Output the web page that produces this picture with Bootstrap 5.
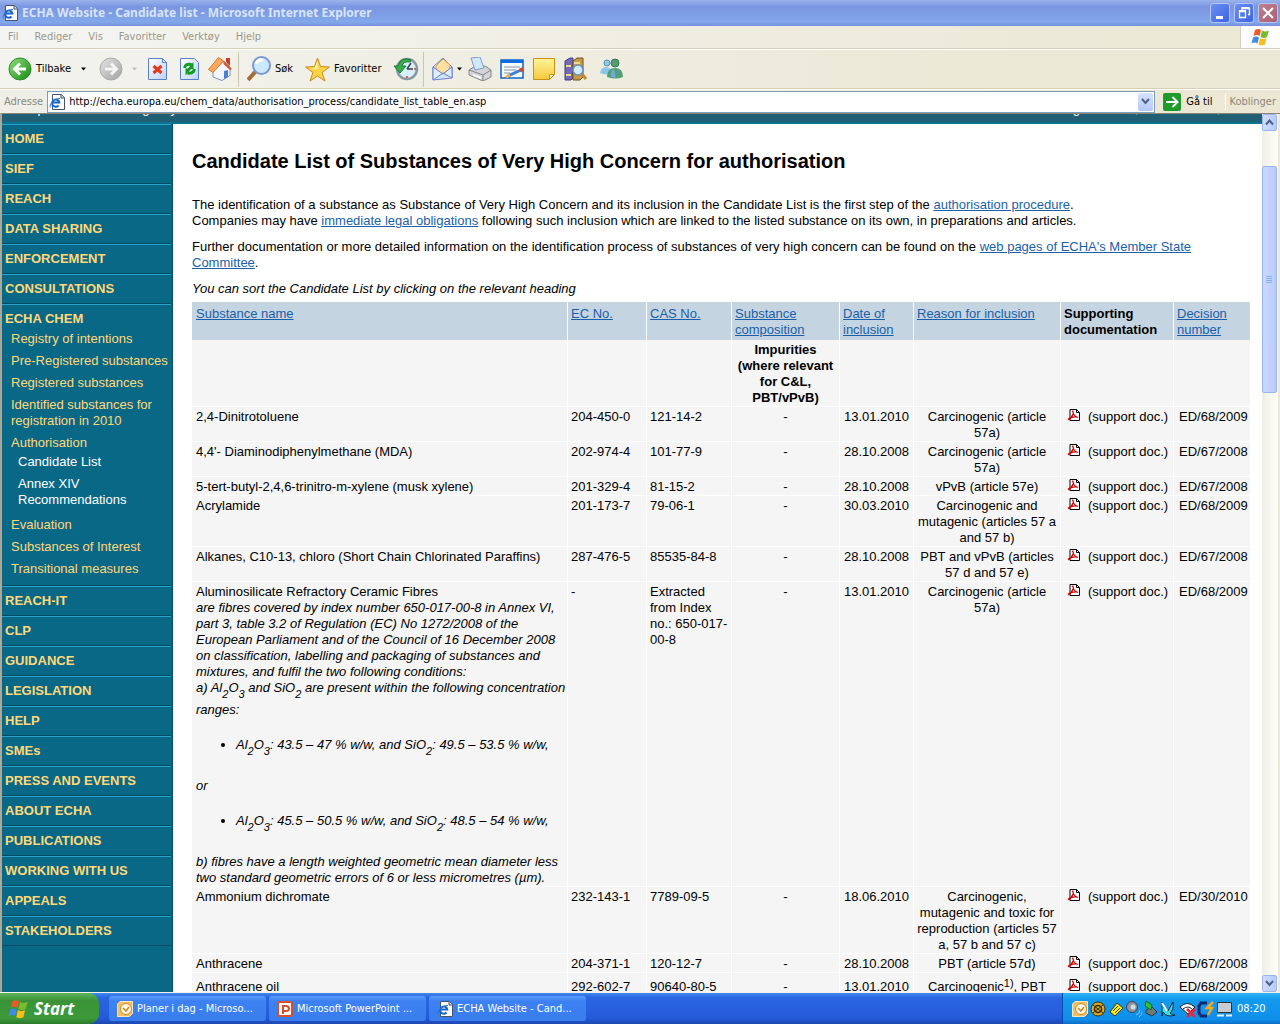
<!DOCTYPE html>
<html lang="en">
<head>
<meta charset="utf-8">
<meta name="viewport" content="width=device-width, initial-scale=1">
<title>ECHA Website - Candidate list</title>
<link href="https://cdn.jsdelivr.net/npm/bootstrap@5.3.0/dist/css/bootstrap.min.css" rel="stylesheet">
<style>
body{font-family:"Liberation Sans",Arial,sans-serif;font-size:13px;line-height:16px;color:#000;background:#ece9d8}
button{font:inherit;color:inherit;background:none;border:0;padding:0}
.chrome-ui{font-family:"DejaVu Sans Condensed","Noto Sans",sans-serif;font-size:11px}
.titlebar{height:26px;background:linear-gradient(#9ab4ec,#7b96e0 25%,#7f9fe6 60%,#82a8ea 85%,#7590de);color:#d8e4f8;font-family:"Noto Sans","Open Sans",sans-serif;font-weight:700;font-size:12px;padding:0 2px}
.winbtn{width:20px;height:20px;border:1px solid #b5c6f2;border-radius:3px;background:linear-gradient(135deg,#6d90f0,#3b63e4);display:flex;align-items:center;justify-content:center}
.winbtn.closing{background:linear-gradient(135deg,#c08090,#a8606f)}
.menubar{height:23px;color:#9c998a;background:linear-gradient(90deg,#f4f5f2,#ece8d6 90%);border-bottom:1px solid #d6d0b8}
.menubar a{color:inherit;text-decoration:none}
.flagbox{width:40px;background:#fff;border-left:1px solid #d6d0b8}
.toolbar{height:40px;background:linear-gradient(90deg,#f3f3ef,#ebe8d5 80%);border-top:1px solid #fff;border-bottom:1px solid #d6d0b8}
.toolbar svg{flex:none}
.vsep{width:1px;height:35px;background:#cbc7ae}
.addressbar{height:24px;border-top:1px solid #fff;background:linear-gradient(90deg,#efefe8,#ebe7d3)}
.addressbar .dimmed{color:#8a887a}
.addrbox{height:22px;border:1px solid #7f9db9;background:#fff;padding:0 1px}
.addrbox input{border:0;outline:0;padding:0;font-size:11px;font-family:inherit;color:#000;background:transparent}
.combo{width:15px;height:18px;border-radius:2px;background:linear-gradient(#d6e2fd,#b4c8f8)}
.viewport{border-left:2px solid #aca899;border-top:1px solid #8a8676;background:#fff}
.band{height:10px;background:#205f74;border-bottom:2px solid #0b7490;color:#fff;overflow:hidden}
.band span{margin-top:-13px}
.sidebar{width:171px;flex:none;background:#0a6887;border-right:1px solid #064d66;padding-right:1px}
.sidebar a{text-decoration:none;color:#ffd877}
.navitem{border-top:1px solid #2aa3cc;border-bottom:1px solid #064d66;padding:6px 3px}
.navitem>a{font-weight:700;display:block}
.sublist{padding:0 0 2px 6px;margin-top:4px}
.sublist li{margin-bottom:6px}
.sublist li:last-child{margin-bottom:0}
.sublist .deeper{padding:3px 7px 3px;margin:0}
.sublist .deeper a{color:#fff}
.maincol{padding:25px 11px 0 19px}
h1{font-size:20px;line-height:24px;font-weight:700;margin:0 0 24px}
.maincol p{margin:0 0 10px}
.maincol a{color:#1b5fa8}
.subst{width:100%;border-collapse:separate;border-spacing:0;table-layout:fixed;margin-top:-5px}
.subst th,.subst td{padding:2px 3px 0;vertical-align:baseline;background:#f5f5f5;border-bottom:1px solid #fff;border-right:1px solid #fff}
.subst thead tr:first-child th{background:#c5d4e1;padding:4px 3px 2px;font-weight:400;border-bottom:0}
.subst thead tr:first-child th.strongth{font-weight:700}
.subst th:first-child,.subst thead tr:first-child th:first-child,.subst td:first-child{padding-left:4px;padding-right:0}
.subst td:nth-child(n+4),.subst .imp{text-align:center}
.subst td:nth-child(n+7){text-align:left;white-space:nowrap}
.subst td:nth-child(8){padding-left:5px;padding-right:0}
.subst td:nth-child(7){padding-left:6px;padding-right:0}
.subst td svg{margin-right:7px;vertical-align:0}
.subst .imp{padding:2px 0 0}
sub,sup{position:static;font-size:11px;line-height:16px}
sub{vertical-align:-6px}
sup{vertical-align:4px}
.fibres ul{margin:19px 0;padding-left:40px}
.scroller{width:18px;flex:none;background:linear-gradient(90deg,#f0efe6,#fefefb);border-right:2px solid #ece9d8;padding:0 1px 0 0}
.scroller button{display:flex;align-items:center;justify-content:center;width:15px;height:17px;border:1px solid #9db7ee;border-radius:2px;background:linear-gradient(90deg,#d0dcfc,#b7cbf9)}
.thumb{width:15px;height:227px;border:1px solid #9ab3ec;border-radius:2px;background:linear-gradient(90deg,#cbdafd,#b8ccfb);margin-top:35px}
.taskbar{height:32px;background:linear-gradient(#3f8af0,#2b65e0 15%,#245bd9 80%,#1c48b0);color:#fff;border-top:1px solid #f4f2e6}
.startbtn{width:99px;background:linear-gradient(#5fb45c,#3a9338 25%,#3c9a3a 80%,#2c7a2c);border-radius:0 10px 10px 0;color:#fff;font-family:"Open Sans",sans-serif;font-weight:700;font-style:italic;font-size:17px}
.tasks{padding-left:10px;gap:3px}
.task{width:157px;height:25px;border-radius:3px;background:linear-gradient(#5b9bf8,#3c81f3 20%,#3a7cec);color:#fff}
.tray{width:218px;background:linear-gradient(#2fb4f4,#129bee 20%,#0f8eea 85%,#0b6fc8);border-left:1px solid #0a4ba8}
</style>
</head>
<body class="vh-100 d-flex flex-column overflow-hidden">
<svg width="0" height="0" class="position-absolute" aria-hidden="true">
<defs>
<linearGradient id="gr" x2="1" y2="1"><stop stop-color="#8ee07a"/><stop offset="1" stop-color="#168a14"/></linearGradient>
<linearGradient id="gy" x2="1" y2="1"><stop stop-color="#e4e4e4"/><stop offset="1" stop-color="#a2a2a2"/></linearGradient>
<linearGradient id="pg" x2="1" y2="1"><stop stop-color="#fff"/><stop offset="1" stop-color="#bcd2fa"/></linearGradient>
<linearGradient id="yl" x2="0" y2="1"><stop stop-color="#fff59a"/><stop offset="1" stop-color="#f5c93c"/></linearGradient>
<symbol id="ie" viewBox="0 0 16 16"><path d="M3.500.5h9l3 3v12h-12z" fill="#fff" stroke="#47536b"/><path d="M12 .5v3.500h3.500" fill="#cbd6ea" stroke="#47536b"/><path d="M9.500 11.500a3.600 3.600 0 1 1 .8-3H3.500" fill="none" stroke="#1763c8" stroke-width="2"/><path d="M1.500 13.500C-.5 11 5 4 11 4.500" fill="none" stroke="#2b74d0"/></symbol>
<symbol id="flag" viewBox="0 0 20 18"><path d="M4 2q3-2 6 0L8.500 8q-3-2-6 0z" fill="#ee5a24"/><path d="M11 2.500q3 2 7 0L16 9q-3 2-6.500 0z" fill="#78bb2b"/><path d="M2 9.500q3-2 6 0L6.500 15.500q-3-2-6 0z" fill="#3f8be6"/><path d="M9 10q3 2 6.500 0L14 16.500q-3 2-6.500 0z" fill="#fabd20"/></symbol>
<symbol id="pdf" viewBox="0 0 14 12"><path d="M3 .5h6.500l3 3v8H3z" fill="#fff" stroke="#000"/><path d="M9.500.5v3h3" fill="none" stroke="#000"/><path d="M5 2.500q1-1 1.200 1Q6.500 7 11 8.500M6 5Q5 8.500 1.500 11M1 10.500q3-3 9.500-2.500" fill="none" stroke="#d40000" stroke-width="1.300"/></symbol>
<symbol id="clockmail" viewBox="0 0 16 16"><path d="M3 .5h12.500v12L12.500 15.500H.5V3z" fill="#f3bd62" stroke="#fbe6bd"/><circle cx="9" cy="8" r="5.500" fill="#fff8e6" stroke="#c98a2a"/><path d="M6 7l3 3 3-4" fill="none" stroke="#ca8420" stroke-width="1.500"/></symbol>
</defs>
</svg>

<header class="chrome-ui flex-shrink-0">
<div class="titlebar d-flex align-items-center">
<svg width="16" height="16" class="me-1"><use href="#ie"/></svg>
<span class="flex-grow-1">ECHA Website - Candidate list - Microsoft Internet Explorer</span>
<div class="d-flex gap-1">
<button class="winbtn" aria-label="Minimize"><svg width="14" height="14"><path d="M3 10h7v3H3z" fill="#fff"/></svg></button>
<button class="winbtn" aria-label="Restore"><svg width="14" height="14"><path d="M5 4V2.500h7.500v6H11M2.500 5.500h6v6h-6z" fill="none" stroke="#fff" stroke-width="1.300"/><path d="M4.500 2h8M2 5h7" stroke="#fff" stroke-width="2"/></svg></button>
<button class="winbtn closing" aria-label="Close"><svg width="14" height="14"><path d="M2 2l10 10M12 2L2 12" stroke="#fff" stroke-width="2"/></svg></button>
</div>
</div>
<nav class="menubar d-flex align-items-stretch">
<div class="d-flex align-items-center flex-grow-1 gap-3 ps-2"><a href="#">Fil</a><a href="#">Rediger</a><a href="#">Vis</a><a href="#">Favoritter</a><a href="#">Verktøy</a><a href="#">Hjelp</a></div>
<div class="flagbox d-flex align-items-center justify-content-center"><svg width="20" height="18"><use href="#flag"/></svg></div>
</nav>
<div class="toolbar d-flex align-items-center">
<button class="d-flex align-items-center ms-2"><svg width="24" height="24"><circle cx="12" cy="12" r="11" fill="url(#gr)" stroke="#2e8a2a"/><path d="M18 12H7M12 6.500L6.500 12l5.500 5.500" fill="none" stroke="#fff" stroke-width="3"/></svg><span class="ms-1">Tilbake</span></button>
<svg width="28" height="24"><path d="M10 10.500h5l-2.500 3z"/></svg>
<button aria-label="Forward"><svg width="24" height="24"><circle cx="12" cy="12" r="11" fill="url(#gy)" stroke="#aaa"/><path d="M6 12h11M12 6.500l5.500 5.500-5.500 5.500" fill="none" stroke="#f4f4f4" stroke-width="3"/></svg></button>
<svg width="25" height="24"><path d="M9 10.500h5l-2.500 3z" fill="#bbb"/></svg>
<button aria-label="Stop"><svg width="20" height="24"><path d="M.5 1.500h14l4 4v17H.5z" fill="url(#pg)" stroke="#5c7fca"/><path d="M14.500 1.500v4h4" fill="none" stroke="#5c7fca"/><path d="M5.500 9l8 7M13.500 9l-8 7" stroke="#e8381b" stroke-width="3"/></svg></button>
<button aria-label="Refresh" class="ms-2 ps-1"><svg width="20" height="24"><path d="M.5 1.500h14l4 4v17H.5z" fill="url(#pg)" stroke="#5c7fca"/><path d="M4.500 11q1-5 7-3.500M14.500 12q-1 5-7 4" fill="none" stroke="#119b23" stroke-width="3"/><path d="M13.500 5v7h-6zM5.500 18.500v-7h6z" fill="#119b23"/></svg></button>
<button aria-label="Home" class="ms-2"><svg width="26" height="24"><path d="M5 11v9l9 3.500 8-5V10L16 4z" fill="#f4f7ff" stroke="#7a90c4"/><path d="M18 1h4v8l-4-4z" fill="#c83a22"/><path d="M15.500 4l8.500 8-2 1-6.500-6z" fill="#d9581f"/><path d="M10.500.5l5 3.500L5 15.500l-4.500-3z" fill="#fba95a" stroke="#d9722f"/><path d="M16 14l4-1v7l-4 2z" fill="#4f7fd0"/></svg></button>
<div class="vsep ms-1 me-2"></div>
<button class="d-flex align-items-center"><svg width="24" height="26"><path d="M1 24l8-9" stroke="#a56c35" stroke-width="4"/><circle cx="14.500" cy="9.500" r="8.500" fill="#cde7fb" stroke="#7b9bd0" stroke-width="2"/><path d="M9 8q2-5 7-4" stroke="#fff" stroke-width="3" fill="none"/></svg><span class="ms-1">Søk</span></button>
<button class="d-flex align-items-center ms-2 ps-1"><svg width="25" height="25"><path d="M12.500 1l3 8.500 9 .5-7.500 5.500L20 24l-7.500-5L5 24l3-8.500L.5 10l9-.5z" fill="#ffd546" stroke="#c8891c"/><path d="M12.500 4v8L4 11l5.500 0z" fill="#fff5b0"/></svg><span class="ms-1">Favoritter</span></button>
<button aria-label="History" class="ms-2 ps-1"><svg width="26" height="24"><circle cx="14" cy="12" r="10" fill="#d8eefa" stroke="#8b98a4" stroke-width="2.500"/><path d="M14 12l4-6M14 12h6" stroke="#345" stroke-width="1.500"/><path d="M18 3Q8-1 5 9H1l6 7 6-7H9q1-5 8-4z" fill="#3cab48" stroke="#157a30"/><path d="M14 19v2M21 12h2" stroke="#e04020" stroke-width="1.500"/></svg></button>
<div class="vsep mx-1"></div>
<button aria-label="Mail" class="ms-1"><svg width="22" height="24"><path d="M1 10l10-9 9 9v11L1 23z" fill="#cfe6fd" stroke="#6d7fcb"/><path d="M4 9l7-7 7 6-1 5-7 4-6-5z" fill="#ffe0a0" stroke="#e0a050"/><path d="M1 23V10l10 7 9-7v11l-9-5z" fill="#dcf0ff" stroke="#6d7fcb"/></svg></button>
<svg width="14" height="24"><path d="M3 10.500h5l-2.500 3z"/></svg>
<button aria-label="Print"><svg width="24" height="24"><path d="M1 13l5-3 11-1 6 4v7l-8 4-14-6z" fill="#d5d5d7" stroke="#838489"/><path d="M3 1l9-1 4 11-9 2z" fill="#d2e8ff" stroke="#7d9dce"/><path d="M1 13l14 5 8-5M15 18v6" fill="none" stroke="#838489"/><path d="M5 17l8 3v2l-8-3z" fill="#fff"/></svg></button>
<button aria-label="Edit" class="ms-2"><svg width="24" height="22"><rect x="1" y="2" width="22" height="18" fill="#f5faff" stroke="#0c62cc" stroke-width="1.500"/><path d="M1 2h22v3H1z" fill="#0c6ce0"/><path d="M4 9h16M4 12h12M4 15h6" stroke="#8593ab"/><path d="M8 18l13-6" stroke="#3c82d8" stroke-width="3"/><path d="M20 12.500l3-1.500" stroke="#e0401a" stroke-width="4"/><path d="M6 19l4-2" stroke="#f2b04a" stroke-width="3"/></svg></button>
<button aria-label="Discuss" class="ms-2"><svg width="24" height="24"><path d="M1.500 1.500h21v16l-5 5h-16z" fill="url(#yl)" stroke="#c59417"/><path d="M22.500 17.500h-5v5z" fill="#fff7b8" stroke="#c59417"/></svg></button>
<button aria-label="Research" class="ms-2"><svg width="24" height="24"><path d="M1 4l5-3h3v20l-2 2H1z" fill="#7469b8" stroke="#43408b"/><path d="M9 4l4-3h6v19l-3 3H9z" fill="#c89b46" stroke="#6a5524"/><path d="M2 9h5M2 18h5M10 6h6" stroke="#e9dd8a" stroke-width="2"/><circle cx="14" cy="13" r="5" fill="#d0edff" stroke="#6b8fc0" stroke-width="1.500"/><path d="M18 17l4 5" stroke="#bf8b34" stroke-width="3"/></svg></button>
<button aria-label="Messenger" class="ms-2 ps-1"><svg width="25" height="24"><circle cx="7" cy="6" r="3" fill="#8fc8ed" stroke="#558bb3"/><path d="M0 16q1-6 6-6t6 6q-5 3-12 0z" fill="#8cc8e6"/><circle cx="15" cy="6" r="4" fill="#559b72" stroke="#33785a"/><path d="M7 20q0-9 8-9t8 9q-7 3-16 0z" fill="#539f78"/><path d="M11 20q-1-6 3-8l2 9z" fill="#6da9e0"/></svg></button>
</div>
<div class="addressbar d-flex align-items-center">
<label for="addr" class="px-1 dimmed">Adresse</label>
<div class="addrbox d-flex align-items-center flex-grow-1"><svg width="16" height="16" class="me-1"><use href="#ie"/></svg><input id="addr" class="flex-grow-1" value="http://echa.europa.eu/chem_data/authorisation_process/candidate_list_table_en.asp"><button class="combo d-flex align-items-center justify-content-center" aria-label="Addresses"><svg width="9" height="7"><path d="M1 1l3.500 4L8 1" fill="none" stroke="#4d6185" stroke-width="2"/></svg></button></div>
<button class="d-flex align-items-center ps-1 ms-1 pe-2"><svg width="19" height="18"><rect width="18" height="18" rx="2" fill="#1f9a2b"/><path d="M3 9h11M9.500 4l5 5-5 5" fill="none" stroke="#fff" stroke-width="2"/></svg><span class="ms-1">Gå til</span></button>
<span class="border-start border-white ps-1 pe-1 ms-1 dimmed">Koblinger</span>
</div>
</header>

<div class="viewport d-flex flex-grow-1 overflow-hidden">
<div class="flex-grow-1 overflow-hidden">
<div class="band d-flex justify-content-between align-items-start"><span class="ps-2">European Chemicals Agency</span><span class="pe-2">Legal notices, Contact form, Links</span></div>
<div class="d-flex">
<nav class="sidebar">
<div class="navitem"><a href="#">HOME</a></div><div class="navitem"><a href="#">SIEF</a></div><div class="navitem"><a href="#">REACH</a></div><div class="navitem"><a href="#">DATA SHARING</a></div><div class="navitem"><a href="#">ENFORCEMENT</a></div><div class="navitem"><a href="#">CONSULTATIONS</a></div>
<div class="navitem"><a href="#">ECHA CHEM</a>
<ul class="sublist list-unstyled mb-0 text-nowrap">
<li><a href="#">Registry of intentions</a></li><li><a href="#">Pre-Registered substances</a></li><li><a href="#">Registered substances</a></li><li><a href="#">Identified substances for<br>registration in 2010</a></li>
<li><a href="#">Authorisation</a><ul class="deeper list-unstyled"><li><a href="#">Candidate List</a></li><li><a href="#">Annex XIV<br>Recommendations</a></li></ul></li>
<li><a href="#">Evaluation</a></li><li><a href="#">Substances of Interest</a></li><li><a href="#">Transitional measures</a></li>
</ul></div>
<div class="navitem"><a href="#">REACH-IT</a></div><div class="navitem"><a href="#">CLP</a></div><div class="navitem"><a href="#">GUIDANCE</a></div><div class="navitem"><a href="#">LEGISLATION</a></div><div class="navitem"><a href="#">HELP</a></div><div class="navitem"><a href="#">SMEs</a></div><div class="navitem"><a href="#">PRESS AND EVENTS</a></div><div class="navitem"><a href="#">ABOUT ECHA</a></div><div class="navitem"><a href="#">PUBLICATIONS</a></div><div class="navitem"><a href="#">WORKING WITH US</a></div><div class="navitem"><a href="#">APPEALS</a></div><div class="navitem"><a href="#">STAKEHOLDERS</a></div>
</nav>
<main class="maincol flex-grow-1">
<h1>Candidate List of Substances of Very High Concern for authorisation</h1>
<p>The identification of a substance as Substance of Very High Concern and its inclusion in the Candidate List is the first step of the <a href="#">authorisation procedure</a>.<br>Companies may have <a href="#">immediate legal obligations</a> following such inclusion which are linked to the listed substance on its own, in preparations and articles.</p>
<p>Further documentation or more detailed information on the identification process of substances of very high concern can be found on the <a href="#">web pages of ECHA's Member State Committee</a>.</p>
<p><em>You can sort the Candidate List by clicking on the relevant heading</em></p>
<table class="subst">
<colgroup><col style="width:376px"><col style="width:79px"><col style="width:85px"><col style="width:108px"><col style="width:74px"><col style="width:147px"><col style="width:113px"><col></colgroup>
<thead>
<tr><th><a href="#">Substance name</a></th><th><a href="#">EC No.</a></th><th><a href="#">CAS No.</a></th><th><a href="#">Substance composition</a></th><th><a href="#">Date of inclusion</a></th><th><a href="#">Reason for inclusion</a></th><th class="strongth">Supporting documentation</th><th><a href="#">Decision number</a></th></tr>
<tr><th></th><th></th><th></th><th class="imp">Impurities<br>(where relevant<br>for C&amp;L,<br>PBT/vPvB)</th><th></th><th></th><th></th><th></th></tr>
</thead>
<tbody>
<tr><td>2,4-Dinitrotoluene</td><td>204-450-0</td><td>121-14-2</td><td>-</td><td>13.01.2010</td><td>Carcinogenic (article 57a)</td><td><svg width="14" height="12"><use href="#pdf"/></svg>(support doc.)</td><td>ED/68/2009</td></tr>
<tr><td>4,4'- Diaminodiphenylmethane (MDA)</td><td>202-974-4</td><td>101-77-9</td><td>-</td><td>28.10.2008</td><td>Carcinogenic (article 57a)</td><td><svg width="14" height="12"><use href="#pdf"/></svg>(support doc.)</td><td>ED/67/2008</td></tr>
<tr><td>5-tert-butyl-2,4,6-trinitro-m-xylene (musk xylene)</td><td>201-329-4</td><td>81-15-2</td><td>-</td><td>28.10.2008</td><td>vPvB (article 57e)</td><td><svg width="14" height="12"><use href="#pdf"/></svg>(support doc.)</td><td>ED/67/2008</td></tr>
<tr><td>Acrylamide</td><td>201-173-7</td><td>79-06-1</td><td>-</td><td>30.03.2010</td><td>Carcinogenic and mutagenic (articles 57 a and 57 b)</td><td><svg width="14" height="12"><use href="#pdf"/></svg>(support doc.)</td><td>ED/68/2009</td></tr>
<tr><td>Alkanes, C10-13, chloro (Short Chain Chlorinated Paraffins)</td><td>287-476-5</td><td>85535-84-8</td><td>-</td><td>28.10.2008</td><td>PBT and vPvB (articles 57 d and 57 e)</td><td><svg width="14" height="12"><use href="#pdf"/></svg>(support doc.)</td><td>ED/67/2008</td></tr>
<tr><td>Aluminosilicate Refractory Ceramic Fibres<div class="fibres fst-italic">are fibres covered by index number 650-017-00-8 in Annex VI, part 3, table 3.2 of Regulation (EC) No 1272/2008 of the European Parliament and of the Council of 16 December 2008 on classification, labelling and packaging of substances and mixtures, and fulfil the two following conditions:<br>a) Al<sub>2</sub>O<sub>3</sub> and SiO<sub>2</sub> are present within the following concentration ranges:
<ul><li>Al<sub>2</sub>O<sub>3</sub>: 43.5 – 47 % w/w, and SiO<sub>2</sub>: 49.5 – 53.5 % w/w,</li></ul>or
<ul><li>Al<sub>2</sub>O<sub>3</sub>: 45.5 – 50.5 % w/w, and SiO<sub>2</sub>: 48.5 – 54 % w/w,</li></ul>b) fibres have a length weighted geometric mean diameter less two standard geometric errors of 6 or less micrometres (µm).</div></td><td>-</td><td>Extracted from Index no.: 650-017-00-8</td><td>-</td><td>13.01.2010</td><td>Carcinogenic (article 57a)</td><td><svg width="14" height="12"><use href="#pdf"/></svg>(support doc.)</td><td>ED/68/2009</td></tr>
<tr><td>Ammonium dichromate</td><td>232-143-1</td><td>7789-09-5</td><td>-</td><td>18.06.2010</td><td>Carcinogenic, mutagenic and toxic for reproduction (articles 57 a, 57 b and 57 c)</td><td><svg width="14" height="12"><use href="#pdf"/></svg>(support doc.)</td><td>ED/30/2010</td></tr>
<tr><td>Anthracene</td><td>204-371-1</td><td>120-12-7</td><td>-</td><td>28.10.2008</td><td>PBT (article 57d)</td><td><svg width="14" height="12"><use href="#pdf"/></svg>(support doc.)</td><td>ED/67/2008</td></tr>
<tr><td>Anthracene oil</td><td>292-602-7</td><td>90640-80-5</td><td>-</td><td>13.01.2010</td><td>Carcinogenic<sup>1)</sup>, PBT</td><td><svg width="14" height="12"><use href="#pdf"/></svg>(support doc.)</td><td>ED/68/2009</td></tr>
</tbody>
</table>
</main>
</div>
</div>
<div class="scroller d-flex flex-column align-items-end" aria-hidden="true">
<button tabindex="-1"><svg width="9" height="7"><path d="M1 5.500l3.500-4 3.500 4" fill="none" stroke="#4d6185" stroke-width="2"/></svg></button>
<div class="thumb d-flex align-items-center justify-content-center"><svg width="7" height="8"><path d="M0 .5h6M0 2.500h6M0 4.500h6M0 6.500h6" stroke="#8cabf0"/></svg></div>
<button tabindex="-1" class="mt-auto"><svg width="9" height="7"><path d="M1 1l3.500 4L8 1" fill="none" stroke="#4d6185" stroke-width="2"/></svg></button>
</div>
</div>

<footer class="taskbar chrome-ui d-flex flex-shrink-0">
<button class="startbtn d-flex align-items-center ps-2"><svg width="22" height="20"><use href="#flag" width="22" height="20"/></svg><span class="ms-1">Start</span></button>
<div class="tasks d-flex align-items-center flex-grow-1">
<button class="task d-flex align-items-center ps-2"><svg width="16" height="16" class="me-1"><use href="#clockmail"/></svg>Planer i dag - Microso...</button>
<button class="task d-flex align-items-center ps-2"><svg width="16" height="16" class="me-1"><rect x="1" y="1" width="14" height="14" rx="2" fill="#fff" stroke="#d5502c" stroke-width="2"/><path d="M6 13V5h3q3 0 3 2.500T9 10H7" fill="none" stroke="#d5502c" stroke-width="2"/></svg>Microsoft PowerPoint ...</button>
<button class="task d-flex align-items-center ps-2"><svg width="16" height="16" class="me-1"><use href="#ie"/></svg>ECHA Website - Cand...</button>
</div>
<div class="tray d-flex align-items-center ps-2"><svg width="162" height="18" class="me-1"><use href="#clockmail" x="1" y="1" width="16" height="16"/>
<circle cx="27" cy="9" r="7" fill="#d6a928" stroke="#3c2d08"/><circle cx="27" cy="9" r="3.500" fill="none" stroke="#3c2d08" stroke-width="1.500"/><path d="M22 5l10 8M22 13l10-8" stroke="#3c2d08"/>
<path d="M39 12l7-9 6 5-8 8z" fill="#f6e91e" stroke="#3b3a10"/><path d="M42 11l5-5M44 13l5-5" stroke="#3b3a10"/>
<circle cx="61" cy="7" r="5.500" fill="#8c949c" stroke="#3b444e"/><circle cx="62" cy="7" r="2.500" fill="#d8dde2"/><path d="M65 15q4-1 4-5M68 17q3-2 3-5" fill="none" stroke="#7fc0ff"/>
<path d="M75 10l6-3 5 5-5 4-6-3z" fill="#6d7a78" stroke="#2b3a38"/><path d="M75 1l6 4-1 5-6-4z" fill="#35c03a" stroke="#136b1b"/>
<path d="M91 2q1 7 6 9l5-9q1 8-3 11 3 3 5 2-8 3-12-3l-1 4z" fill="#37e0e0" stroke="#0d2c34"/><path d="M91 3l5 8" stroke="#fff" stroke-width="2"/>
<path d="M109 7q7-7 15 0l-7 7z" fill="#fff" stroke="#222"/><path d="M112 9q5-4 9 0" fill="none" stroke="#222"/><path d="M116 9l8 8M124 9l-8 8" stroke="#e3283a" stroke-width="2.500"/>
<path d="M136 3h-6l-2 3v7l2 3h6" fill="none" stroke="#14266e" stroke-width="3"/><path d="M142 2l-6 6h5l-4 7" fill="none" stroke="#f7a81d" stroke-width="2.500"/>
<path d="M146.500 2.500h14v10h-14z" fill="#c9ccd0" stroke="#333"/><path d="M146 15.500h7M155 15.500h6" stroke="#eee" stroke-width="2"/></svg><span>08:20</span></div>
</footer>
<script src="https://cdn.jsdelivr.net/npm/bootstrap@5.3.0/dist/js/bootstrap.bundle.min.js"></script>
</body>
</html>
